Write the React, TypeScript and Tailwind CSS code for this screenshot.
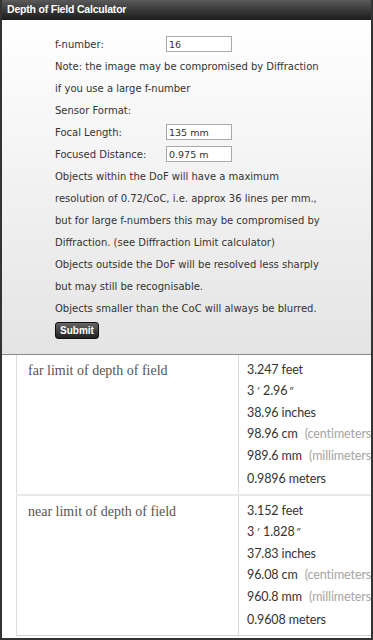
import React from "react";

const FORM_LINES = [
  "Note: the image may be compromised by Diffraction",
  "if you use a large f-number",
  "Sensor Format:",
];

const NOTES = [
  "Objects within the DoF will have a maximum",
  "resolution of 0.72/CoC, i.e. approx 36 lines per mm.,",
  "but for large f-numbers this may be compromised by",
  "Diffraction. (see Diffraction Limit calculator)",
  "Objects outside the DoF will be resolved less sharply",
  "but may still be recognisable.",
  "Objects smaller than the CoC will always be blurred.",
];

const RESULTS = [
  {
    label: "far limit of depth of field",
    feet: "3.247",
    ftIn: ["3", "2.96"],
    inches: "38.96",
    cm: "98.96",
    mm: "989.6",
    meters: "0.9896",
  },
  {
    label: "near limit of depth of field",
    feet: "3.152",
    ftIn: ["3", "1.828"],
    inches: "37.83",
    cm: "96.08",
    mm: "960.8",
    meters: "0.9608",
  },
];

function Field({ label, value }: { label: string; value: string }) {
  return (
    <div className="flex h-[22px] items-center">
      <span className="w-[111px]">{label}</span>
      <input
        readOnly
        value={value}
        className="h-[16px] w-[66px] border border-[#a9a9a9] bg-white px-[2px] text-[9.5px] text-[#333] outline-none"
      />
    </div>
  );
}

function ResultRow({ r, first }: { r: (typeof RESULTS)[number]; first?: boolean }) {
  return (
    <div className={first ? "flex" : "flex border-t-2 border-[#e8e8e8]"}>
      <div className="w-[222px] shrink-0 border-l border-[#dcdcdc] pl-[11px] pt-[5px] font-['Liberation_Serif',serif] text-[14px] leading-[21px] text-[#555]">
        {r.label}
      </div>
      <div className="shrink-0 whitespace-nowrap border-l border-[#dcdcdc] pb-[3px] pl-[8px] pr-4 pt-[4px] font-['Lato',sans-serif] text-[12.5px] tracking-[-0.1px] text-[#333]">
        <div className="leading-[21px]">{r.feet} feet</div>
        <div className="leading-[21px]">
          {r.ftIn[0]}
          <span className="ml-[2px] mr-[4px] text-[10px] italic">′</span>
          {r.ftIn[1]}
          <span className="ml-[1px] text-[10px] italic">″</span>
        </div>
        <div className="leading-[21px]">{r.inches} inches</div>
        <div className="leading-[22px]">
          {r.cm} cm <span className="ml-[4px] text-[#a5a5a5]">(centimeters)</span>
        </div>
        <div className="leading-[22px]">
          {r.mm} mm <span className="ml-[4px] text-[#a5a5a5]">(millimeters)</span>
        </div>
        <div className="leading-[24px]">{r.meters} meters</div>
      </div>
    </div>
  );
}

export default function App() {
  return (
    <div className="h-[640px] w-[373px] overflow-hidden border-x-2 border-b-2 border-[#333] bg-white">
      {/* title bar */}
      <div className="flex h-[20px] items-center bg-gradient-to-b from-[#5a5a5a] to-[#1c1c1c] pl-[5px] font-['Liberation_Sans',Arial,sans-serif] text-[10.5px] font-bold tracking-[-0.2px] text-white">
        Depth of Field Calculator
      </div>

      {/* form */}
      <div className="h-[335px] border-b border-[#8a8a8a] bg-gradient-to-b from-white to-[#e4e4e4] pl-[53px] pt-[13px] font-['DejaVu_Sans',Verdana,sans-serif] text-[10px] text-[#333]">
        <Field label="f-number:" value="16" />
        {FORM_LINES.map((t) => (
          <div key={t} className="flex h-[22px] items-center">
            {t}
          </div>
        ))}
        <Field label="Focal Length:" value="135 mm" />
        <Field label="Focused Distance:" value="0.975 m" />
        {NOTES.map((t) => (
          <div key={t} className="flex h-[22px] items-center">
            {t}
          </div>
        ))}
        <button className="mt-[3px] h-[17px] w-[44px] rounded-[3px] border border-[#111] bg-gradient-to-b from-[#666] to-[#222] font-['Liberation_Sans',Arial,sans-serif] text-[10px] font-bold text-white">
          Submit
        </button>
      </div>

      {/* results */}
      <div className="pl-[14px]">
        <div className="border-b border-[#d0d0d0]">
          {RESULTS.map((r, i) => (
            <ResultRow key={r.label} r={r} first={i === 0} />
          ))}
        </div>
      </div>
    </div>
  );
}
